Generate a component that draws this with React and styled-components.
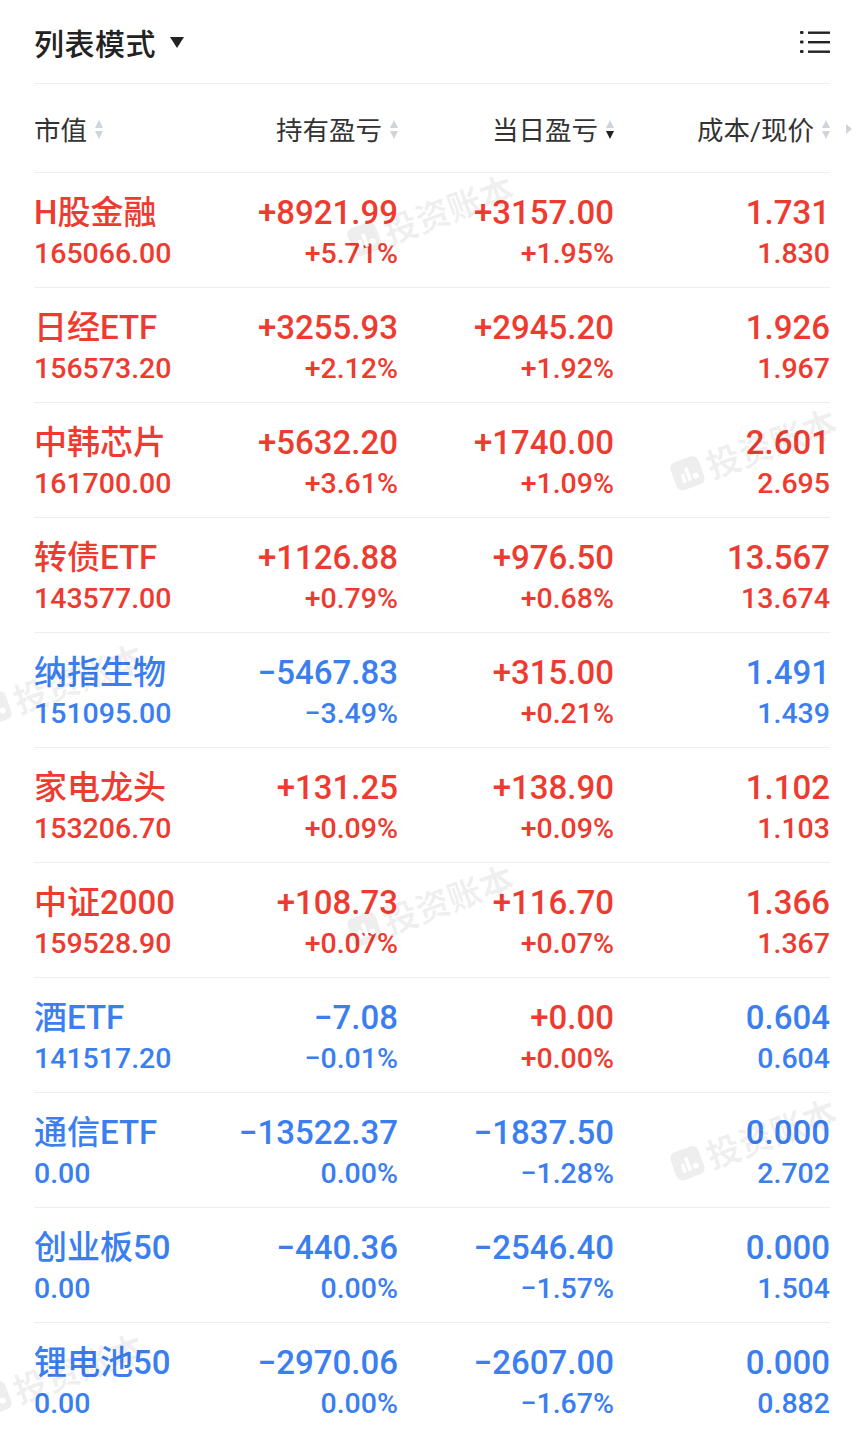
import React from 'react';
import styled, { createGlobalStyle } from 'styled-components';

const RED = '#ee3b30';
const BLUE = '#3b7ef0';

const GlobalStyle = createGlobalStyle`
    body {
        margin: 0;
        background: #fff;
        font-family: Roboto, "Noto Sans CJK SC", sans-serif;
    }
`;

const Page = styled.div`
    position: relative;
    width: 865px;
    height: 1434px;
    overflow: hidden;
    background: #fff;
`;

const Inner = styled.div`
    padding: 0 35px 0 34px;
`;

const TopBar = styled.div`
    height: 84px;
    display: flex;
    align-items: center;
    justify-content: space-between;
    border-bottom: 1px solid #eeeeee;
    box-sizing: border-box;
`;

const Title = styled.div`
    display: flex;
    align-items: center;
    gap: 14px;
    font-size: 30px;
    font-weight: 500;
    color: #222;
    letter-spacing: 0.5px;
`;

const Caret = styled.span`
    width: 0;
    height: 0;
    border-left: 7px solid transparent;
    border-right: 7px solid transparent;
    border-top: 11px solid #222;
    margin-top: 2px;
`;

const HeadRow = styled.div`
    height: 89px;
    display: grid;
    grid-template-columns: 148px 216px 216px 216px;
    align-items: center;
    border-bottom: 1px solid #eeeeee;
    box-sizing: border-box;
`;

const HeadCell = styled.div`
    position: relative;
    display: flex;
    align-items: center;
    justify-content: ${p => (p.left ? 'flex-start' : 'flex-end')};
    gap: 8px;
    font-size: 26.5px;
    color: #333;
`;

const Sorter = styled.span`
    display: flex;
    flex-direction: column;
    gap: 3px;
    margin-top: 2px;
`;

const Tri = styled.span`
    width: 0;
    height: 0;
    border-left: 4px solid transparent;
    border-right: 4px solid transparent;
    ${p => (p.up ? `border-bottom: 8px solid ${p.dark ? '#222' : '#cfd4dc'};` : `border-top: 8px solid ${p.dark ? '#222' : '#cfd4dc'};`)}
`;

const MoreArrow = styled.span`
    position: absolute;
    right: -22px;
    top: 50%;
    margin-top: -4px;
    width: 0;
    height: 0;
    border-top: 5px solid transparent;
    border-bottom: 5px solid transparent;
    border-left: 6px solid #cfd4dc;
`;

const Row = styled.div`
    height: 115px;
    display: grid;
    grid-template-columns: 148px 216px 216px 216px;
    align-items: center;
    border-bottom: 1px solid #eeeeee;
    box-sizing: border-box;
    padding-top: 5px;
`;

const Cell = styled.div`
    display: flex;
    flex-direction: column;
    align-items: ${p => (p.left ? 'flex-start' : 'flex-end')};
    color: ${p => p.color};
    white-space: nowrap;
    font-weight: 500;
`;

const Main = styled.div`
    font-size: 33px;
    line-height: 41px;
`;

const Sub = styled.div`
    font-size: 28.5px;
    line-height: 41px;
`;

const Watermark = styled.div`
    position: absolute;
    display: flex;
    align-items: center;
    gap: 6px;
    transform: rotate(-20deg);
    color: rgba(0, 0, 0, 0.065);
    font-size: 34px;
    font-weight: 700;
    pointer-events: none;
    white-space: nowrap;
`;

const MenuIcon = () => (
    <svg width="30" height="24" viewBox="0 0 30 24">
        <g fill="#222">
            <rect x="0" y="1" width="3.5" height="3" rx="1" />
            <rect x="0" y="10.5" width="3.5" height="3" rx="1" />
            <rect x="0" y="20" width="3.5" height="3" rx="1" />
            <rect x="8" y="1.5" width="22" height="2.4" />
            <rect x="8" y="11" width="22" height="2.4" />
            <rect x="8" y="20.5" width="22" height="2.4" />
        </g>
    </svg>
);

const MarkIcon = () => (
    <svg width="30" height="30" viewBox="0 0 30 30">
        <rect x="0" y="0" width="30" height="30" rx="7" fill="currentColor" />
        <g fill="#fff">
            <rect x="8" y="14" width="3.5" height="9" />
            <rect x="13.5" y="9" width="3.5" height="14" />
            <circle cx="22" cy="20" r="3" />
        </g>
    </svg>
);

const Sort = ({ down }) => (
    <Sorter>
        <Tri up />
        <Tri dark={down} />
    </Sorter>
);

const rows = [
    ['H股金融', '165066.00', '+8921.99', '+5.71%', '+3157.00', '+1.95%', '1.731', '1.830'],
    ['日经ETF', '156573.20', '+3255.93', '+2.12%', '+2945.20', '+1.92%', '1.926', '1.967'],
    ['中韩芯片', '161700.00', '+5632.20', '+3.61%', '+1740.00', '+1.09%', '2.601', '2.695'],
    ['转债ETF', '143577.00', '+1126.88', '+0.79%', '+976.50', '+0.68%', '13.567', '13.674'],
    ['纳指生物', '151095.00', '−5467.83', '−3.49%', '+315.00', '+0.21%', '1.491', '1.439'],
    ['家电龙头', '153206.70', '+131.25', '+0.09%', '+138.90', '+0.09%', '1.102', '1.103'],
    ['中证2000', '159528.90', '+108.73', '+0.07%', '+116.70', '+0.07%', '1.366', '1.367'],
    ['酒ETF', '141517.20', '−7.08', '−0.01%', '+0.00', '+0.00%', '0.604', '0.604'],
    ['通信ETF', '0.00', '−13522.37', '0.00%', '−1837.50', '−1.28%', '0.000', '2.702'],
    ['创业板50', '0.00', '−440.36', '0.00%', '−2546.40', '−1.57%', '0.000', '1.504'],
    ['锂电池50', '0.00', '−2970.06', '0.00%', '−2607.00', '−1.67%', '0.000', '0.882'],
];

const marks = [
    { left: 345, top: 190 },
    { left: 668, top: 424 },
    { left: -25, top: 659 },
    { left: 345, top: 880 },
    { left: 668, top: 1114 },
    { left: -25, top: 1349 },
];

const signColor = v => (v.startsWith('−') ? BLUE : RED);

const App = () => (
    <Page>
        <GlobalStyle />
        <Inner>
            <TopBar>
                <Title>列表模式<Caret /></Title>
                <MenuIcon />
            </TopBar>
            <HeadRow>
                <HeadCell left>市值<Sort /></HeadCell>
                <HeadCell>持有盈亏<Sort /></HeadCell>
                <HeadCell>当日盈亏<Sort down /></HeadCell>
                <HeadCell>成本/现价<Sort /><MoreArrow /></HeadCell>
            </HeadRow>
            {rows.map(r => {
                const hold = signColor(r[2]);
                const day = signColor(r[4]);
                return (
                    <Row key={r[0]}>
                        <Cell left color={hold}>
                            <Main>{r[0]}</Main>
                            <Sub>{r[1]}</Sub>
                        </Cell>
                        <Cell color={hold}>
                            <Main>{r[2]}</Main>
                            <Sub>{r[3]}</Sub>
                        </Cell>
                        <Cell color={day}>
                            <Main>{r[4]}</Main>
                            <Sub>{r[5]}</Sub>
                        </Cell>
                        <Cell color={hold}>
                            <Main>{r[6]}</Main>
                            <Sub>{r[7]}</Sub>
                        </Cell>
                    </Row>
                );
            })}
        </Inner>
        {marks.map((m, i) => (
            <Watermark key={i} style={{ left: m.left, top: m.top }}>
                <MarkIcon />投资账本
            </Watermark>
        ))}
    </Page>
);

export default App;
